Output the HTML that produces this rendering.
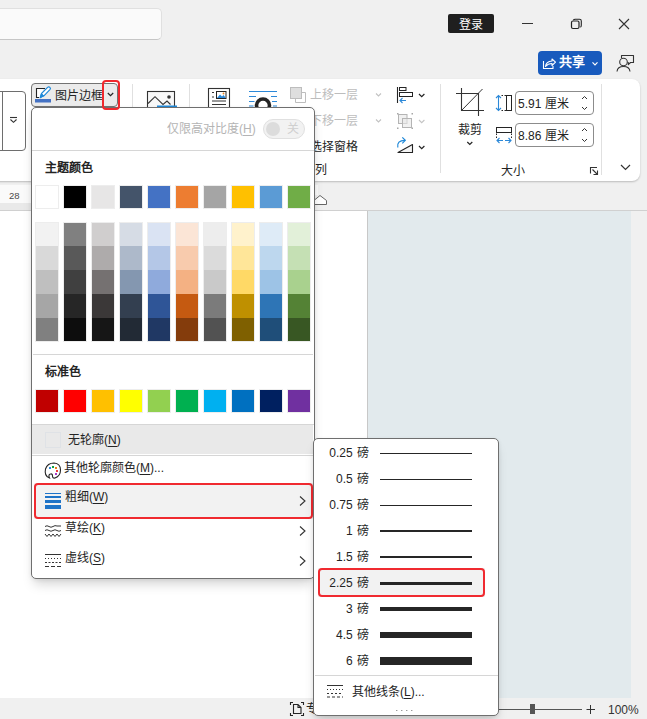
<!DOCTYPE html>
<html lang="zh-CN">
<head>
<meta charset="utf-8">
<style>
*{margin:0;padding:0;box-sizing:border-box}
html,body{width:647px;height:719px;overflow:hidden;background:#f0f0f0;font-family:"Liberation Sans",sans-serif;color:#242424;position:relative}
.a{position:absolute}
.t{position:absolute;white-space:nowrap;font-size:12px;line-height:16px}
svg{position:absolute;overflow:visible}
.sw{position:absolute;width:24px;height:24px;border:1px solid rgba(0,0,0,.07);background-clip:padding-box!important}
.col{position:absolute;width:24px;border:1px solid rgba(0,0,0,.07);background:#fff}

u{text-decoration:none;border-bottom:1px solid currentColor;line-height:11px;display:inline-block}
</style>
</head>
<body>
<!-- ============ TITLE BAR ============ -->
<div class="a" style="left:-10px;top:8px;width:172px;height:32px;background:#fafafa;border:1px solid #e0e0e0;border-bottom-color:#c6c6c6;border-radius:5px"></div>
<div class="a" style="left:448px;top:14px;width:46px;height:19px;background:#1f1f1f;border-radius:2px"></div>
<div class="t" style="left:459px;top:17px;color:#fff">登录</div>
<div class="a" style="left:522px;top:23px;width:11px;height:1px;background:#333"></div>
<svg style="left:0;top:0" width="647" height="80">
  <rect x="571.5" y="21" width="7.5" height="7.5" rx="1.5" fill="none" stroke="#242424" stroke-width="1.2"/>
  <path d="M573.3 20.2 Q573.8 19.3 575.3 19.3 H579.5 Q581.3 19.3 581.3 21.1 V25.3 Q581.3 26.8 580.4 27.3" fill="none" stroke="#242424" stroke-width="1.1"/>
  <path d="M619 19 L629 29 M629 19 L619 29" stroke="#333" stroke-width="1.1"/>
</svg>
<!-- share -->
<div class="a" style="left:538px;top:51px;width:64px;height:24px;background:#185abd;border-radius:4px"></div>
<svg style="left:0;top:0" width="647" height="80">
  <path d="M543.5 61 V68.5 H553 V66" fill="none" stroke="#fff" stroke-width="1.1"/>
  <path d="M545.5 66.5 Q546 61.5 552 61 V59 L555.5 62.2 L552 65.5 V63.5 Q548 63.5 545.5 66.5 Z" fill="none" stroke="#fff" stroke-width="1.1" stroke-linejoin="round"/>
  <path d="M592.5 62.3 L595 64.8 L597.5 62.3" fill="none" stroke="#fff" stroke-width="1.2"/>
  <path d="M621.5 58 V55.5 H633.5 V62.5 H630.5 L628.3 64.7 V62.5 H627.5" fill="none" stroke="#333" stroke-width="1.1" stroke-linejoin="round"/>
  <circle cx="623.5" cy="62" r="3.8" fill="#f0f0f0" stroke="#333" stroke-width="1.1"/>
  <path d="M617 71.5 Q617.5 66.5 623.5 66.5 Q629.5 66.5 630 71.5" fill="none" stroke="#333" stroke-width="1.1"/>
</svg>
<div class="t" style="left:559px;top:54px;color:#fff;font-size:13px;font-weight:bold">共享</div>

<!-- ============ RIBBON ============ -->
<div class="a" style="left:-20px;top:79px;width:660px;height:102px;background:#fff;border-radius:8px;box-shadow:0 1px 2px rgba(0,0,0,.22)"></div>
<!-- gallery box -->
<div class="a" style="left:-5px;top:91px;width:31px;height:60px;border:1px solid #6e6e6e;border-radius:0 4px 4px 0"></div>
<div class="a" style="left:2px;top:91px;width:1px;height:60px;background:#6e6e6e"></div>
<svg style="left:0;top:0" width="30" height="160">
  <path d="M10 117.5 H17" stroke="#333" stroke-width="1.1"/>
  <path d="M10.5 119.5 L13.5 122.3 L16.5 119.5" fill="none" stroke="#333" stroke-width="1.1"/>
</svg>
<!-- 图片边框 button -->
<div class="a" style="left:31px;top:83px;width:87px;height:24px;background:#ebebeb;border:1px solid #737373;border-radius:4px"></div>
<svg style="left:0;top:0" width="130" height="112">
  <rect x="37" y="89" width="6" height="8.5" fill="#fff"/>
  <path d="M45 88.5 H36.5 V97.5 H39" fill="none" stroke="#242424" stroke-width="1.1"/>
  <path d="M40.2 97.6 L41.5 93.5 L47.6 87.4 Q48.8 86.3 49.9 87.4 Q51 88.5 49.9 89.7 L43.9 95.8 Z" fill="#fff" stroke="#1e88d8" stroke-width="1.2" stroke-linejoin="round"/>
  <path d="M40.2 97.6 L41.5 93.5 L43.9 95.8 Z" fill="#1e88d8" stroke="#1e88d8" stroke-width=".8"/>
  <rect x="35" y="99" width="16" height="3.5" fill="#4472c4"/>
  <path d="M107.8 93 L110.5 95.7 L113.2 93" fill="none" stroke="#242424" stroke-width="1.2"/>
</svg>
<div class="t" style="left:55px;top:88px">图片边框</div>
<div class="a" style="left:102px;top:80px;width:18px;height:30px;border:2px solid #f0282d;border-radius:4px;z-index:10"></div>
<!-- separators -->
<div class="a" style="left:132px;top:84px;width:1px;height:90px;background:#e0e0e0"></div>
<div class="a" style="left:189px;top:84px;width:1px;height:90px;background:#e0e0e0"></div>
<div class="a" style="left:440px;top:84px;width:1px;height:89px;background:#e0e0e0"></div>
<div class="a" style="left:601px;top:84px;width:1px;height:91px;background:#e0e0e0"></div>
<!-- icons -->
<svg style="left:0;top:0" width="647" height="180">
  <!-- picture -->
  <rect x="147.5" y="91.5" width="27" height="20" fill="#f8f8f8" stroke="#333" stroke-width="1.1"/>
  <path d="M148 103.5 L155 96.7 L163 104.5 L167 101 L170.5 104.5" fill="none" stroke="#333" stroke-width="1.1"/>
  <circle cx="169" cy="97" r="1.8" fill="#333"/>
  <rect x="157" y="105.5" width="20" height="1.5" fill="#1e88d8"/>
  <!-- position -->
  <rect x="208.5" y="88.5" width="21" height="22" fill="none" stroke="#333" stroke-width="1.1"/>
  <rect x="216.5" y="91.5" width="9.5" height="7" fill="#fff" stroke="#242424" stroke-width="1"/>
  <path d="M217 98 L220 94.5 L222 96.5 L223.5 95 L225.5 97.5 V98 Z" fill="#2b88d8"/>
  <circle cx="223.5" cy="93.5" r=".9" fill="#e8821e"/>
  <path d="M212 92.5 H214 M212 97 H214 M212 101 H226 M212 104.5 H226" stroke="#333" stroke-width="1"/>
  <!-- wrap -->
  <path d="M249 91.5 H277 M249 96.5 H256 M271 96.5 H277 M249 101.5 H254.5 M272 101.5 H277 M249 106 H253.5 M273 106 H277" stroke="#2b88d8" stroke-width="1.2"/>
  <circle cx="263" cy="105.5" r="6.5" fill="none" stroke="#242424" stroke-width="3.6"/>
  <!-- bring forward -->
  <rect x="290.5" y="87.5" width="11" height="11" fill="#dedede" stroke="#bdbdbd"/>
  <path d="M302 92.5 H305.5 V102.5 H295.5 V99" fill="none" stroke="#bdbdbd" stroke-width="1"/>
  <path d="M376 93.5 L378.5 96 L381 93.5" fill="none" stroke="#c2c2c2" stroke-width="1.1"/>
  <!-- send backward -->
  <path d="M376 119.5 L378.5 122 L381 119.5" fill="none" stroke="#c2c2c2" stroke-width="1.1"/>
  <!-- align -->
  <path d="M397.5 87 V103" stroke="#242424" stroke-width="1.1"/>
  <rect x="399.5" y="87.5" width="6.5" height="3" fill="none" stroke="#242424" stroke-width="1"/>
  <rect x="399.5" y="92.5" width="13" height="4" fill="none" stroke="#242424" stroke-width="1"/>
  <path d="M406 100.5 H400 M402.5 98 L400 100.5 L402.5 103" fill="none" stroke="#2b88d8" stroke-width="1.1"/>
  <path d="M419 94 L421.7 96.7 L424.4 94" fill="none" stroke="#242424" stroke-width="1.2"/>
  <!-- group -->
  <rect x="397" y="113" width="1.5" height="1.5" fill="#a8a8a8"/>
  <rect x="411.5" y="113" width="1.5" height="1.5" fill="#a8a8a8"/>
  <rect x="397" y="127.5" width="1.5" height="1.5" fill="#a8a8a8"/>
  <rect x="411.5" y="127.5" width="1.5" height="1.5" fill="#a8a8a8"/>
  <rect x="398.5" y="114.5" width="8.5" height="9" fill="#f0f0f0" stroke="#b4b4b4" stroke-width="1"/>
  <rect x="402.5" y="118.5" width="9" height="9" fill="#e8e8e8" fill-opacity=".6" stroke="#b4b4b4" stroke-width="1"/>
  <path d="M419 120 L421.7 122.7 L424.4 120" fill="none" stroke="#c4c4c4" stroke-width="1.1"/>
  <!-- rotate -->
  <path d="M398 152.5 L412.5 144.5 V152.5 Z" fill="#f4f4f4" stroke="#242424" stroke-width="1.1" stroke-linejoin="round"/>
  <path d="M397.8 147.5 Q396.5 140.5 405 140.3" fill="none" stroke="#1e88d8" stroke-width="1.2"/>
  <path d="M402.3 137.3 L405.3 140.3 L402.3 143.3" fill="none" stroke="#1e88d8" stroke-width="1.2"/>
  <path d="M419 146 L421.7 148.7 L424.4 146" fill="none" stroke="#242424" stroke-width="1.2"/>
  <!-- crop -->
  <path d="M461.5 88 V110.5 H484 M456 93.5 H478.5 V116" fill="none" stroke="#333" stroke-width="1.1"/>
  <path d="M461.5 110.5 L482.5 89" stroke="#333" stroke-width="1"/>
  <path d="M467.3 142 L469.8 144.5 L472.3 142" fill="none" stroke="#242424" stroke-width="1.2"/>
  <!-- height -->
  <path d="M498.5 95.5 V110.5 M496 98 L498.5 95.5 L501 98 M496 108 L498.5 110.5 L501 108" fill="none" stroke="#2b88d8" stroke-width="1.1"/>
  <rect x="506.5" y="95.5" width="5" height="15" fill="none" stroke="#242424" stroke-width="1"/>
  <path d="M501.5 95.5 H503 M504.5 95.5 H506 M501.5 110.5 H503 M504.5 110.5 H506" stroke="#242424" stroke-width="1"/>
  <!-- width -->
  <rect x="496.5" y="127.5" width="15" height="5" fill="none" stroke="#242424" stroke-width="1"/>
  <path d="M496.5 133.5 V135 M496.5 136.5 V138 M511.5 133.5 V135 M511.5 136.5 V138" stroke="#242424" stroke-width="1"/>
  <path d="M497 140.5 H503 M499.5 138 L497 140.5 L499.5 143 M505 140.5 H511 M508.5 138 L511 140.5 L508.5 143" fill="none" stroke="#2b88d8" stroke-width="1.1"/>
  <!-- spinners -->
  <path d="M582 99 L584.5 96.5 L587 99 M582 107 L584.5 109.5 L587 107" fill="none" stroke="#333" stroke-width="1"/>
  <path d="M582 131 L584.5 128.5 L587 131 M582 139 L584.5 141.5 L587 139" fill="none" stroke="#333" stroke-width="1"/>
  <!-- launcher -->
  <path d="M597 167.5 H590.5 V173.5" fill="none" stroke="#333" stroke-width="1.1"/>
  <path d="M592.5 169.5 L597.5 174.5 M597.5 170.5 V174.5 H593.5" fill="none" stroke="#333" stroke-width="1.1"/>
  <!-- collapse -->
  <path d="M621 165 L625.5 169.5 L630 165" fill="none" stroke="#333" stroke-width="1.2"/>
</svg>
<div class="t" style="left:310px;top:87px;color:#bdbdbd">上移一层</div>
<div class="t" style="left:310px;top:113px;color:#bdbdbd">下移一层</div>
<div class="t" style="left:310px;top:139px">选择窗格</div>
<div class="t" style="left:303px;top:161.5px">排列</div>
<div class="t" style="left:458px;top:122px">裁剪</div>
<div class="a" style="left:515px;top:91px;width:79px;height:24px;border:1px solid #8c8c8c;border-radius:4px"></div>
<div class="a" style="left:515px;top:123px;width:79px;height:24px;border:1px solid #8c8c8c;border-radius:4px"></div>
<div class="t" style="left:518px;top:95.5px;font-size:12px">5.91 厘米</div>
<div class="t" style="left:518px;top:127.5px;font-size:12px">8.86 厘米</div>
<div class="t" style="left:501px;top:163px">大小</div>

<!-- ============ RULER ============ -->
<div class="a" style="left:0;top:185px;width:31px;height:18px;background:#fafafa"></div>
<div class="a" style="left:0;top:203px;width:31px;height:7px;background:#e9e9e9"></div>
<div class="t" style="left:9px;top:187.5px;font-size:9.5px;color:#4a4a4a">28</div>
<svg style="left:0;top:0" width="647" height="215">
  <rect x="315" y="185" width="3" height="10" fill="#fbfbfb"/>
  <path d="M314.5 204.5 V200 L320 195.5 L326.5 200.5 V204.5 Z" fill="#fff" stroke="#666" stroke-width="1"/>
</svg>

<!-- ============ DOCUMENT ============ -->
<div class="a" style="left:0;top:210px;width:647px;height:1px;background:#d0d0d0"></div>
<div class="a" style="left:0;top:211px;width:367px;height:487px;background:#fff"></div>
<div class="a" style="left:367px;top:211px;width:1px;height:487px;background:#c8c8c8"></div>
<div class="a" style="left:368px;top:211px;width:263px;height:487px;background:#e2eaed"></div>
<div class="t" style="left:306px;top:701px">专注</div>
<!-- status bar -->
<svg style="left:0;top:0" width="647" height="719">
  <path d="M290.5 705 V702.5 H293 M301 702.5 H303.5 V705 M290.5 713 V715.5 H293 M301 715.5 H303.5 V713" fill="none" stroke="#242424" stroke-width="1.1"/>
  <path d="M293.5 704.5 H298 L301 707.5 V713.5 H293.5 Z M298 704.5 V707.5 H301" fill="none" stroke="#242424" stroke-width="1.1"/>
  <path d="M498 709.5 H582" stroke="#555" stroke-width="1"/>
  <rect x="530" y="704" width="5" height="10" fill="#555"/>
  <path d="M586.5 709.5 H595 M590.5 705 V714" stroke="#333" stroke-width="1"/>
</svg>
<div class="t" style="left:608px;top:702px;font-size:12px;color:#333">100%</div>
<!-- ============ MAIN MENU ============ -->
<div class="a" style="left:31px;top:107px;width:284px;height:472px;background:#fff;border:1px solid #6f6f6f;border-radius:5px;box-shadow:0 8px 12px -3px rgba(0,0,0,.17),0 1px 4px rgba(0,0,0,.07)"></div>
<div class="t" style="left:167px;top:121px;color:#b4b4b4">仅限高对比度(<u>H</u>)</div>
<div class="a" style="left:263px;top:119px;width:42px;height:20px;background:#f2f2f2;border:1px solid #e0e0e0;border-radius:10px"></div>
<div class="a" style="left:266px;top:122px;width:14px;height:14px;background:#dcdcdc;border-radius:50%"></div>
<div class="t" style="left:287px;top:121px;color:#cfcfcf">关</div>
<div class="a" style="left:32px;top:150px;width:282px;height:1px;background:#d6d6d6"></div>
<div class="t" style="left:45px;top:160px;font-weight:bold;color:#242424">主题颜色</div>
<div class="sw" style="left:35px;top:185px;background:#FFFFFF"></div>
<div class="sw" style="left:63px;top:185px;background:#000000"></div>
<div class="sw" style="left:91px;top:185px;background:#E7E6E6"></div>
<div class="sw" style="left:119px;top:185px;background:#44546A"></div>
<div class="sw" style="left:147px;top:185px;background:#4472C4"></div>
<div class="sw" style="left:175px;top:185px;background:#ED7D31"></div>
<div class="sw" style="left:203px;top:185px;background:#A5A5A5"></div>
<div class="sw" style="left:231px;top:185px;background:#FFC000"></div>
<div class="sw" style="left:259px;top:185px;background:#5B9BD5"></div>
<div class="sw" style="left:287px;top:185px;background:#70AD47"></div>
<div class="col" style="left:35px;top:222px;height:120px"><div style="height:23px;background:#F2F2F2"></div><div style="height:24px;background:#D9D9D9"></div><div style="height:24px;background:#BFBFBF"></div><div style="height:24px;background:#A6A6A6"></div><div style="height:23px;background:#808080"></div></div>
<div class="col" style="left:63px;top:222px;height:120px"><div style="height:23px;background:#808080"></div><div style="height:24px;background:#595959"></div><div style="height:24px;background:#404040"></div><div style="height:24px;background:#262626"></div><div style="height:23px;background:#0D0D0D"></div></div>
<div class="col" style="left:91px;top:222px;height:120px"><div style="height:23px;background:#D0CECE"></div><div style="height:24px;background:#AEABAB"></div><div style="height:24px;background:#757171"></div><div style="height:24px;background:#3B3838"></div><div style="height:23px;background:#161616"></div></div>
<div class="col" style="left:119px;top:222px;height:120px"><div style="height:23px;background:#D6DCE5"></div><div style="height:24px;background:#ADB9CA"></div><div style="height:24px;background:#8497B0"></div><div style="height:24px;background:#333F50"></div><div style="height:23px;background:#222A35"></div></div>
<div class="col" style="left:147px;top:222px;height:120px"><div style="height:23px;background:#DAE3F3"></div><div style="height:24px;background:#B4C7E7"></div><div style="height:24px;background:#8FAADC"></div><div style="height:24px;background:#2F5597"></div><div style="height:23px;background:#203864"></div></div>
<div class="col" style="left:175px;top:222px;height:120px"><div style="height:23px;background:#FBE5D6"></div><div style="height:24px;background:#F8CBAD"></div><div style="height:24px;background:#F4B183"></div><div style="height:24px;background:#C55A11"></div><div style="height:23px;background:#843C0C"></div></div>
<div class="col" style="left:203px;top:222px;height:120px"><div style="height:23px;background:#EDEDED"></div><div style="height:24px;background:#DBDBDB"></div><div style="height:24px;background:#C9C9C9"></div><div style="height:24px;background:#7B7B7B"></div><div style="height:23px;background:#525252"></div></div>
<div class="col" style="left:231px;top:222px;height:120px"><div style="height:23px;background:#FFF2CC"></div><div style="height:24px;background:#FFE699"></div><div style="height:24px;background:#FFD966"></div><div style="height:24px;background:#BF9000"></div><div style="height:23px;background:#7F6000"></div></div>
<div class="col" style="left:259px;top:222px;height:120px"><div style="height:23px;background:#DEEBF7"></div><div style="height:24px;background:#BDD7EE"></div><div style="height:24px;background:#9DC3E6"></div><div style="height:24px;background:#2E75B6"></div><div style="height:23px;background:#1F4E79"></div></div>
<div class="col" style="left:287px;top:222px;height:120px"><div style="height:23px;background:#E2F0D9"></div><div style="height:24px;background:#C5E0B4"></div><div style="height:24px;background:#A9D18E"></div><div style="height:24px;background:#548235"></div><div style="height:23px;background:#385723"></div></div>
<div class="a" style="left:33px;top:354px;width:280px;height:1px;background:#d6d6d6"></div>
<div class="t" style="left:45px;top:364px;font-weight:bold;color:#242424">标准色</div>
<div class="sw" style="left:35px;top:389px;background:#C00000"></div>
<div class="sw" style="left:63px;top:389px;background:#FF0000"></div>
<div class="sw" style="left:91px;top:389px;background:#FFC000"></div>
<div class="sw" style="left:119px;top:389px;background:#FFFF00"></div>
<div class="sw" style="left:147px;top:389px;background:#92D050"></div>
<div class="sw" style="left:175px;top:389px;background:#00B050"></div>
<div class="sw" style="left:203px;top:389px;background:#00B0F0"></div>
<div class="sw" style="left:231px;top:389px;background:#0070C0"></div>
<div class="sw" style="left:259px;top:389px;background:#002060"></div>
<div class="sw" style="left:287px;top:389px;background:#7030A0"></div>
<div class="a" style="left:32px;top:424px;width:282px;height:1px;background:#d6d6d6"></div>
<div class="a" style="left:32px;top:425px;width:281px;height:29px;background:#e9e9e9"></div>
<div class="a" style="left:45px;top:432px;width:16px;height:16px;border:1px solid #dfe2e6"></div>
<div class="t" style="left:68px;top:432px">无轮廓(<u>N</u>)</div>
<div class="a" style="left:32px;top:455px;width:282px;height:1px;background:#d6d6d6"></div>
<div class="t" style="left:64px;top:460px">其他轮廓颜色(<u>M</u>)...</div>
<div class="a" style="left:34px;top:483px;width:279px;height:36px;background:#f2f2f2"></div>
<div class="a" style="left:34px;top:483px;width:279px;height:36px;border:2px solid #f02a30;border-radius:4px"></div>
<div class="t" style="left:65px;top:489px">粗细(<u>W</u>)</div>
<div class="t" style="left:65px;top:520px">草绘(<u>K</u>)</div>
<div class="t" style="left:65px;top:550px">虚线(<u>S</u>)</div>
<svg style="left:0;top:0" width="330" height="600">
  <path d="M49.5 478 Q44 476 45.5 469 Q47.5 463 54 463 Q60.5 463.5 60.5 470 Q60.5 476 55 478 Q52.5 478.5 52.5 476 Q52.5 473.5 50.5 474 Q48 474.5 49.5 478 Z" fill="#fff" stroke="#242424" stroke-width="1.1"/>
  <rect x="49" y="467" width="2" height="2" fill="#2b88d8"/>
  <rect x="52" y="466" width="2" height="2" fill="#10a33b"/>
  <rect x="55" y="467" width="2" height="2" fill="#e8821e"/>
  <rect x="56" y="470" width="2" height="2" fill="#e83a3a"/>
  <rect x="55" y="473" width="2" height="2" fill="#a83ac8"/>
  <rect x="45" y="493" width="16" height="1" fill="#1f74c8"/>
  <rect x="45" y="496" width="16" height="2" fill="#1f74c8"/>
  <rect x="45" y="500" width="16" height="3" fill="#1f74c8"/>
  <rect x="45" y="505" width="16" height="4" fill="#1f74c8"/>
  <path d="M45 526.5 Q47 525 49 526.5 T53 526.5 T57 526 H61" fill="none" stroke="#333" stroke-width="1"/>
  <path d="M45 530.5 Q47 529 49 530.5 T53 530.5 T57 530.5 T61 530.5" fill="none" stroke="#333" stroke-width="1"/>
  <path d="M45 534 L47 536.5 L49 534 L51 536.5 L53 534 L55 536.5 L57 534 L59 536.5 L61 534" fill="none" stroke="#333" stroke-width="1"/>
  <path d="M45 554.5 H61" stroke="#333" stroke-width="1"/>
  <path d="M45 558.5 H61" stroke="#333" stroke-width="1" stroke-dasharray="1 2"/>
  <path d="M45 562.5 H61" stroke="#333" stroke-width="1" stroke-dasharray="2 1.5"/>
  <path d="M45 566.5 H61" stroke="#333" stroke-width="1" stroke-dasharray="4 2"/>
  <path d="M300 496.5 L305 501 L300 505.5 M300 526.5 L305 531 L300 535.5 M300 556.5 L305 561 L300 565.5" fill="none" stroke="#333" stroke-width="1.1"/>
</svg>
<!-- ============ SUBMENU ============ -->
<div class="a" style="left:313px;top:438px;width:186px;height:278px;background:#fff;border:1px solid #6f6f6f;border-radius:5px;box-shadow:0 8px 12px -3px rgba(0,0,0,.17),0 1px 4px rgba(0,0,0,.07)"></div>
<div class="a" style="left:318px;top:568px;width:167px;height:29px;background:#f2f2f2"></div>
<div class="a" style="left:318px;top:568px;width:167px;height:29px;border:2px solid #f02a30;border-radius:4px"></div>
<div class="t" style="left:310px;width:59px;text-align:right;top:445px">0.25<span style="margin-left:1px"> 磅</span></div>
<div class="a" style="left:380px;top:453px;width:92px;height:1px;background:#262626"></div>
<div class="t" style="left:310px;width:59px;text-align:right;top:471px">0.5<span style="margin-left:1px"> 磅</span></div>
<div class="a" style="left:380px;top:479px;width:92px;height:1px;background:#262626"></div>
<div class="t" style="left:310px;width:59px;text-align:right;top:497px">0.75<span style="margin-left:1px"> 磅</span></div>
<div class="a" style="left:380px;top:505px;width:92px;height:1px;background:#262626"></div>
<div class="t" style="left:310px;width:59px;text-align:right;top:523px">1<span style="margin-left:1px"> 磅</span></div>
<div class="a" style="left:380px;top:530px;width:92px;height:2px;background:#262626"></div>
<div class="t" style="left:310px;width:59px;text-align:right;top:549px">1.5<span style="margin-left:1px"> 磅</span></div>
<div class="a" style="left:380px;top:556px;width:92px;height:2px;background:#262626"></div>
<div class="t" style="left:310px;width:59px;text-align:right;top:575px">2.25<span style="margin-left:1px"> 磅</span></div>
<div class="a" style="left:380px;top:582px;width:92px;height:3px;background:#262626"></div>
<div class="t" style="left:310px;width:59px;text-align:right;top:601px">3<span style="margin-left:1px"> 磅</span></div>
<div class="a" style="left:380px;top:607px;width:92px;height:4px;background:#262626"></div>
<div class="t" style="left:310px;width:59px;text-align:right;top:627px">4.5<span style="margin-left:1px"> 磅</span></div>
<div class="a" style="left:380px;top:632px;width:92px;height:6px;background:#262626"></div>
<div class="t" style="left:310px;width:59px;text-align:right;top:653px">6<span style="margin-left:1px"> 磅</span></div>
<div class="a" style="left:380px;top:657px;width:92px;height:8px;background:#262626"></div>
<div class="a" style="left:315px;top:675px;width:183px;height:1px;background:#d6d6d6"></div>
<div class="t" style="left:352px;top:684px">其他线条(<u>L</u>)...</div>
<svg style="left:0;top:0" width="647" height="719">
  <path d="M327 685.5 H343" stroke="#333" stroke-width="1"/>
  <path d="M327 689.5 H343" stroke="#333" stroke-width="1" stroke-dasharray="1 2"/>
  <path d="M327 693.5 H343" stroke="#333" stroke-width="1" stroke-dasharray="2 2"/>
  <path d="M327 697 H343" stroke="#333" stroke-width="1" stroke-dasharray="3 2"/>
  <path d="M396 710.5 H413" stroke="#9a9a9a" stroke-width="1.2" stroke-dasharray="1.4 3.6"/>
</svg>
</body>
</html>
